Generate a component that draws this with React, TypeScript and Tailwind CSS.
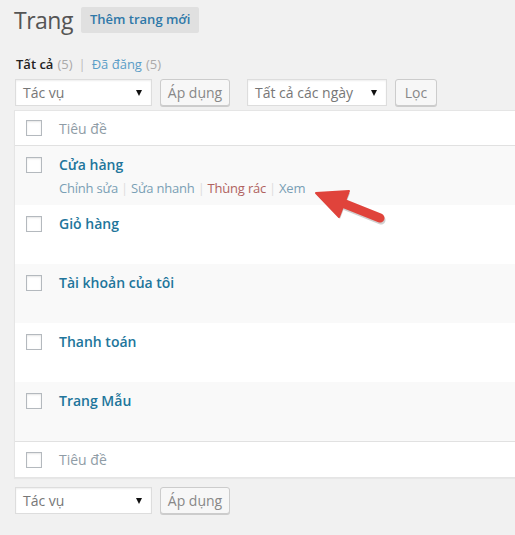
import React from "react";

function Checkbox() {
  return <div className="w-[16px] h-[16px] border border-[#b4b9be] bg-white shadow-[inset_0_1px_2px_rgba(0,0,0,0.1)]" />;
}

function Select({ label, w }: { label: string; w: string }) {
  return (
    <div className={`${w} h-[27px] bg-white border border-[#ddd] shadow-[inset_0_1px_2px_rgba(0,0,0,0.07)] flex items-center justify-between pl-[7px] pr-[9px] text-[14px] text-[#777]`}>
      <span>{label}</span>
      <span className="w-0 h-0 border-l-[3px] border-r-[3px] border-t-[6px] border-l-transparent border-r-transparent border-t-[#111]" />
    </div>
  );
}

function Btn({ label, w }: { label: string; w: string }) {
  return (
    <div className={`${w} h-[27px] bg-[#f7f7f7] border border-[#ccc] rounded-[3px] shadow-[0_1px_0_#ccc] flex items-center justify-center text-[14px] text-[#888]`}>
      {label}
    </div>
  );
}

function Controls({ withDate }: { withDate: boolean }) {
  return (
    <div className="flex items-center ml-[15px]">
      <Select label="Tác vụ" w="w-[137px]" />
      <div className="ml-[8px]"><Btn label="Áp dụng" w="w-[70px]" /></div>
      {withDate && (
        <>
          <div className="ml-[17px]"><Select label="Tất cả các ngày" w="w-[140px]" /></div>
          <div className="ml-[8px]"><Btn label="Lọc" w="w-[42px]" /></div>
        </>
      )}
    </div>
  );
}

const rows = ["Cửa hàng", "Giỏ hàng", "Tài khoản của tôi", "Thanh toán", "Trang Mẫu"];

function Sep() {
  return <span className="text-[#ddd] mx-[3px]">|</span>;
}

export default function App() {
  return (
    <div className="relative w-[515px] h-[535px] bg-[#f1f1f1] overflow-hidden" style={{ fontFamily: '"Open Sans", sans-serif' }}>
      <div className="flex items-center pl-[14px] pt-[6px] h-[34px]">
        <span className="text-[23px] text-[#555] leading-[28px] tracking-[-0.5px]">Trang</span>
        <div className="ml-[8px] h-[26px] px-[9px] bg-[#e0e0e0] rounded-[2px] flex items-center text-[13px] font-semibold text-[#2f78a8]">
          Thêm trang mới
        </div>
      </div>
      <div className="mt-[21px] ml-[16px] h-[20px] flex items-center text-[13px]">
        <span className="font-semibold text-[#222]">Tất cả</span>
        <span className="text-[#aaa] ml-[4px]">(5)</span>
        <span className="text-[#bbb] mx-[6px]">|</span>
        <span className="text-[#5b9dc7]">Đã đăng</span>
        <span className="text-[#aaa] ml-[4px]">(5)</span>
      </div>
      <div className="mt-[4px]">
        <Controls withDate />
      </div>
      <div className="mt-[4px] ml-[14px] w-[520px] bg-white border border-[#e5e5e5] shadow-[0_1px_1px_rgba(0,0,0,0.04)]">
        <div className="h-[35px] flex items-center border-b border-[#e1e1e1]">
          <div className="ml-[11px]"><Checkbox /></div>
          <span className="ml-[17px] text-[14px] text-[#8f9ca6]">Tiêu đề</span>
        </div>
        {rows.map((r, i) => (
          <div key={r} className={`h-[59px] flex items-start ${i % 2 === 0 ? "bg-[#f9f9f9]" : "bg-white"}`}>
            <div className="ml-[11px] mt-[11px]"><Checkbox /></div>
            <div className="ml-[17px] mt-[9px] flex flex-col">
              <span className="text-[14px] font-semibold text-[#21759b] leading-[20px]">{r}</span>
              {i === 0 && (
                <div className="mt-[4px] flex items-center text-[13px] leading-[18px] tracking-[-0.2px]">
                  <span className="text-[#7a9fb5]">Chỉnh sửa</span>
                  <Sep />
                  <span className="text-[#7a9fb5]">Sửa nhanh</span>
                  <Sep />
                  <span className="text-[#b0625f]">Thùng rác</span>
                  <Sep />
                  <span className="text-[#7a9fb5]">Xem</span>
                </div>
              )}
            </div>
          </div>
        ))}
        <div className="h-[36px] flex items-center border-t border-[#e1e1e1]">
          <div className="ml-[11px]"><Checkbox /></div>
          <span className="ml-[17px] text-[14px] text-[#8f9ca6]">Tiêu đề</span>
        </div>
      </div>
      <div className="mt-[9px]">
        <Controls withDate={false} />
      </div>
      <svg className="absolute left-[300px] top-[180px]" width="100" height="50" viewBox="0 0 100 50">
        <g transform="translate(1,2)" opacity="0.18">
          <line x1="40" y1="22" x2="80" y2="38" stroke="#000" strokeWidth="9" strokeLinecap="round" />
          <polygon points="16,13 49,11 39,37" fill="#000" />
        </g>
        <line x1="40" y1="22" x2="80" y2="38" stroke="#e0433b" strokeWidth="9" strokeLinecap="round" />
        <polygon points="16,13 49,11 39,37" fill="#e0433b" stroke="#e0433b" strokeWidth="2" strokeLinejoin="round" />
      </svg>
    </div>
  );
}
